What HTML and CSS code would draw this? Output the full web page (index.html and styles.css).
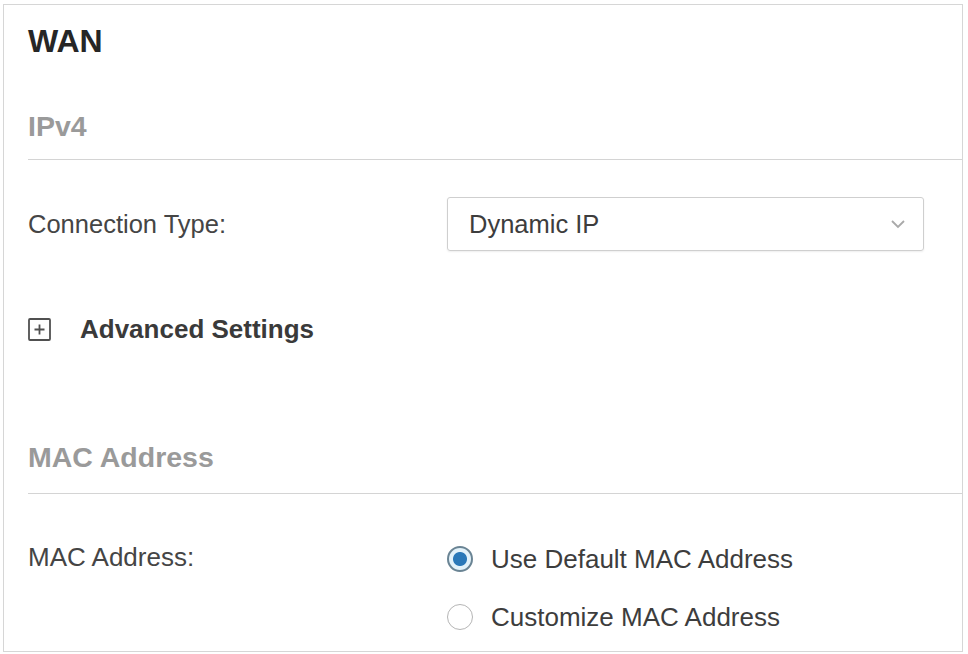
FILE: index.html
```html
<!DOCTYPE html>
<html>
<head>
<meta charset="utf-8">
<link rel="stylesheet" href="styles.css">
</head>
<body>
<div class="panel">
  <h1 class="title">WAN</h1>

  <div class="section-head first">IPv4</div>

  <div class="row conn-row">
    <div class="label">Connection Type:</div>
    <div class="select">
      <span class="select-value">Dynamic IP</span>
      <svg class="chevron" width="16" height="10" viewBox="0 0 16 10"><path d="M2 2 L8 8 L14 2" fill="none" stroke="#a9a9a9" stroke-width="1.8"/></svg>
    </div>
  </div>

  <div class="advanced">
    <span class="plus-box">
      <svg width="23" height="23" viewBox="0 0 23 23"><rect x="1" y="1" width="21" height="21" rx="1" fill="none" stroke="#505050" stroke-width="1.8"/><path d="M11.5 6.5 V16.5 M6.5 11.5 H16.5" stroke="#505050" stroke-width="1.8"/></svg>
    </span>
    <span class="adv-text">Advanced Settings</span>
  </div>

  <div class="section-head second">MAC Address</div>

  <div class="row mac-row">
    <div class="label">MAC Address:</div>
    <div class="radios">
      <div class="option"><span class="radio checked"></span><span class="opt-text">Use Default MAC Address</span></div>
      <div class="option"><span class="radio"></span><span class="opt-text">Customize MAC Address</span></div>
    </div>
  </div>
</div>
</body>
</html>
```

FILE: styles.css
```css
html, body {
  margin: 0;
  padding: 0;
  background: #ffffff;
}
body {
  font-family: "Liberation Sans", Arial, Helvetica, sans-serif;
  color: #3a3a3a;
  width: 968px;
  height: 654px;
  overflow: hidden;
}
.panel {
  box-sizing: border-box;
  margin: 4px 0 0 3px;
  width: 960px;
  height: 648px;
  border: 1.5px solid #d6d6d6;
  padding: 18px 0 0 24px;
  background: #fff;
}
.title {
  margin: 0;
  font-size: 32px;
  line-height: 36px;
  font-weight: bold;
  color: #262626;
}
.section-head {
  font-size: 28.5px;
  line-height: 34px;
  font-weight: bold;
  color: #9a9a9a;
  padding-bottom: 16px;
  border-bottom: 1.5px solid #d4d4d4;
}
.section-head.first {
  margin-top: 50px;
}
.section-head.second {
  margin-top: 96px;
  padding-bottom: 19px;
}
.row {
  display: flex;
}
.label {
  width: 419px;
  font-size: 25.5px;
  line-height: 32px;
  color: #454545;
}
.conn-row {
  margin-top: 37px;
  align-items: center;
  height: 54px;
}
.select {
  box-sizing: border-box;
  width: 477px;
  height: 54px;
  border: 1.5px solid #cfcfcf;
  border-radius: 3px;
  box-shadow: 0 1px 2px rgba(0,0,0,0.07);
  display: flex;
  align-items: center;
  justify-content: space-between;
  padding: 0 17px 0 21px;
}
.select-value {
  font-size: 25.5px;
  color: #3d3d3d;
}
.chevron {
  display: block;
}
.advanced {
  margin-top: 63px;
  height: 30px;
  display: flex;
  align-items: center;
}
.plus-box {
  display: flex;
  width: 23px;
  height: 23px;
  margin-right: 29px;
}
.adv-text {
  font-size: 26px;
  font-weight: bold;
  color: #3a3a3a;
}
.mac-row {
  margin-top: 47px;
  align-items: flex-start;
}
.mac-row .label {
  font-size: 26px;
  line-height: 32px;
}
.radios {
  display: flex;
  flex-direction: column;
  gap: 22px;
}
.option {
  display: flex;
  align-items: center;
  height: 36px;
}
.radio {
  box-sizing: border-box;
  width: 26px;
  height: 26px;
  border-radius: 50%;
  border: 1.5px solid #b5b5b5;
  margin-right: 18px;
  background: #fff;
}
.radio.checked {
  border: 2px solid #6a8494;
  background: radial-gradient(circle, #2a78b8 0, #2a78b8 6.5px, #e2f2fa 7.5px, #e2f2fa 100%);
}
.opt-text {
  font-size: 26px;
  color: #3d3d3d;
}
```
